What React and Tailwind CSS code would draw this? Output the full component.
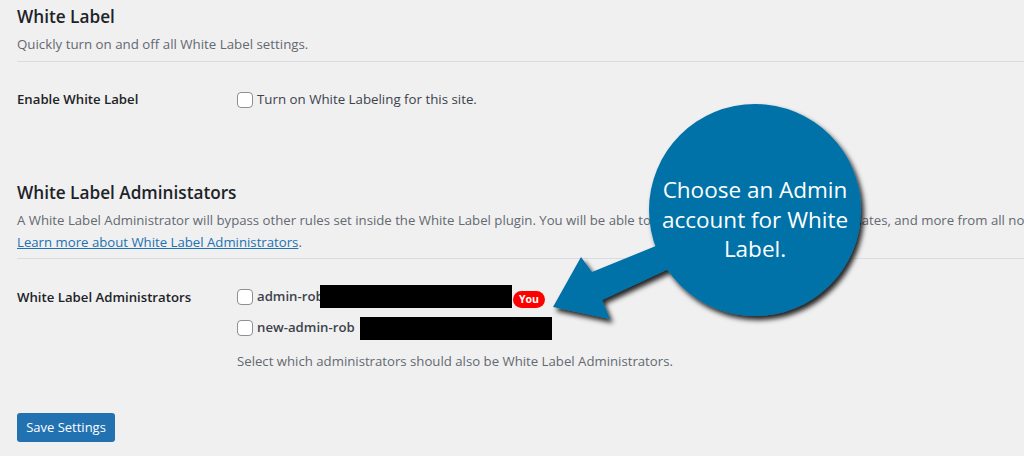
import React from "react";

function Checkbox() {
  return (
    <span className="inline-block w-[16px] h-[16px] shrink-0 rounded-[4px] border border-[#8c8f94] bg-white" />
  );
}

export default function App() {
  return (
    <div
      className="relative w-[1024px] h-[456px] overflow-hidden bg-[#f0f0f1] text-[#3c434a]"
      style={{ fontFamily: '"Open Sans", "Noto Sans", sans-serif' }}
    >
      <div className="pl-[17px] pt-[5px]">
        <h2 className="h-[24px] leading-[24px] text-[17.2px] font-semibold text-[#1d2327]">
          White Label
        </h2>
        <p className="mt-[5px] h-[20px] leading-[20px] text-[13.3px] text-[#646970]">
          Quickly turn on and off all White Label settings.
        </p>
        <div className="mt-[7px] border-t border-[#dcdcde]" />

        <div className="mt-[26px] flex items-center h-[24px]">
          <div className="w-[220px] text-[13.2px] font-semibold text-[#1d2327]">
            Enable White Label
          </div>
          <label className="flex items-center gap-[4px] text-[13.3px] text-[#3c434a]">
            <Checkbox />
            <span>Turn on White Labeling for this site.</span>
          </label>
        </div>

        <h2 className="mt-[69px] h-[24px] leading-[24px] text-[17.2px] font-semibold text-[#1d2327]">
          White Label Administators
        </h2>
        <p className="mt-[4px] leading-[22px] text-[13.2px] text-[#646970] whitespace-nowrap">
          A White Label Administrator will bypass other rules set inside the White Label plugin. You will be able to see all menus, notices, plugin updates, and more from all non-administrators.
          <br />
          <a className="text-[#2271b1] underline">Learn more about White Label Administrators</a>.
        </p>
        <div className="mt-[5px] border-t border-[#dcdcde]" />

        <div className="mt-[26px] flex">
          <div className="w-[220px] h-[24px] leading-[24px] text-[13.2px] font-semibold text-[#1d2327]">
            White Label Administrators
          </div>
          <div className="flex flex-col">
            <div className="flex items-center h-[24px]">
              <Checkbox />
              <span className="ml-[4px] w-[63px] whitespace-nowrap text-[13.2px] font-semibold text-[#3c434a]">
                admin-rob
              </span>
              <span className="self-start w-[192px] h-[23px] bg-black" />
              <span className="ml-[1px] mt-[6px] self-start h-[17px] w-[32px] rounded-full bg-[#f00] text-white text-[10.5px] font-bold leading-[17px] text-center">
                You
              </span>
            </div>
            <div className="mt-[7px] flex items-center h-[24px]">
              <Checkbox />
              <span className="ml-[4px] w-[103px] whitespace-nowrap text-[13.2px] font-semibold text-[#3c434a]">
                new-admin-rob
              </span>
              <span className="w-[192px] h-[23px] bg-black" />
            </div>
            <p className="mt-[11px] h-[20px] leading-[20px] text-[13.2px] text-[#646970]">
              Select which administrators should also be White Label Administrators.
            </p>
          </div>
        </div>

        <button className="mt-[42px] w-[98px] h-[29px] rounded-[3px] bg-[#2271b1] text-white text-[13px]">
          Save Settings
        </button>
      </div>

      {/* Callout annotation */}
      <svg
        className="absolute left-0 top-0 pointer-events-none"
        width="1024"
        height="456"
        viewBox="0 0 1024 456"
      >
        <defs>
          <filter id="sh" x="-20%" y="-20%" width="140%" height="140%">
            <feDropShadow dx="3" dy="4" stdDeviation="2.5" floodColor="#000" floodOpacity="0.85" />
          </filter>
        </defs>
        <g filter="url(#sh)" fill="#0272a8">
          <polygon points="553,307 581,257 592,272 700,228 705,252 602,300 610,319" />
          <circle cx="755" cy="210" r="106" />
        </g>
      </svg>
      <div
        className="absolute left-[649px] top-[175px] w-[212px] text-center text-white text-[22.5px] leading-[29.5px]"
        style={{ fontFamily: '"Open Sans", sans-serif' }}
      >
        Choose an Admin
        <br />
        account for White
        <br />
        Label.
      </div>
    </div>
  );
}
